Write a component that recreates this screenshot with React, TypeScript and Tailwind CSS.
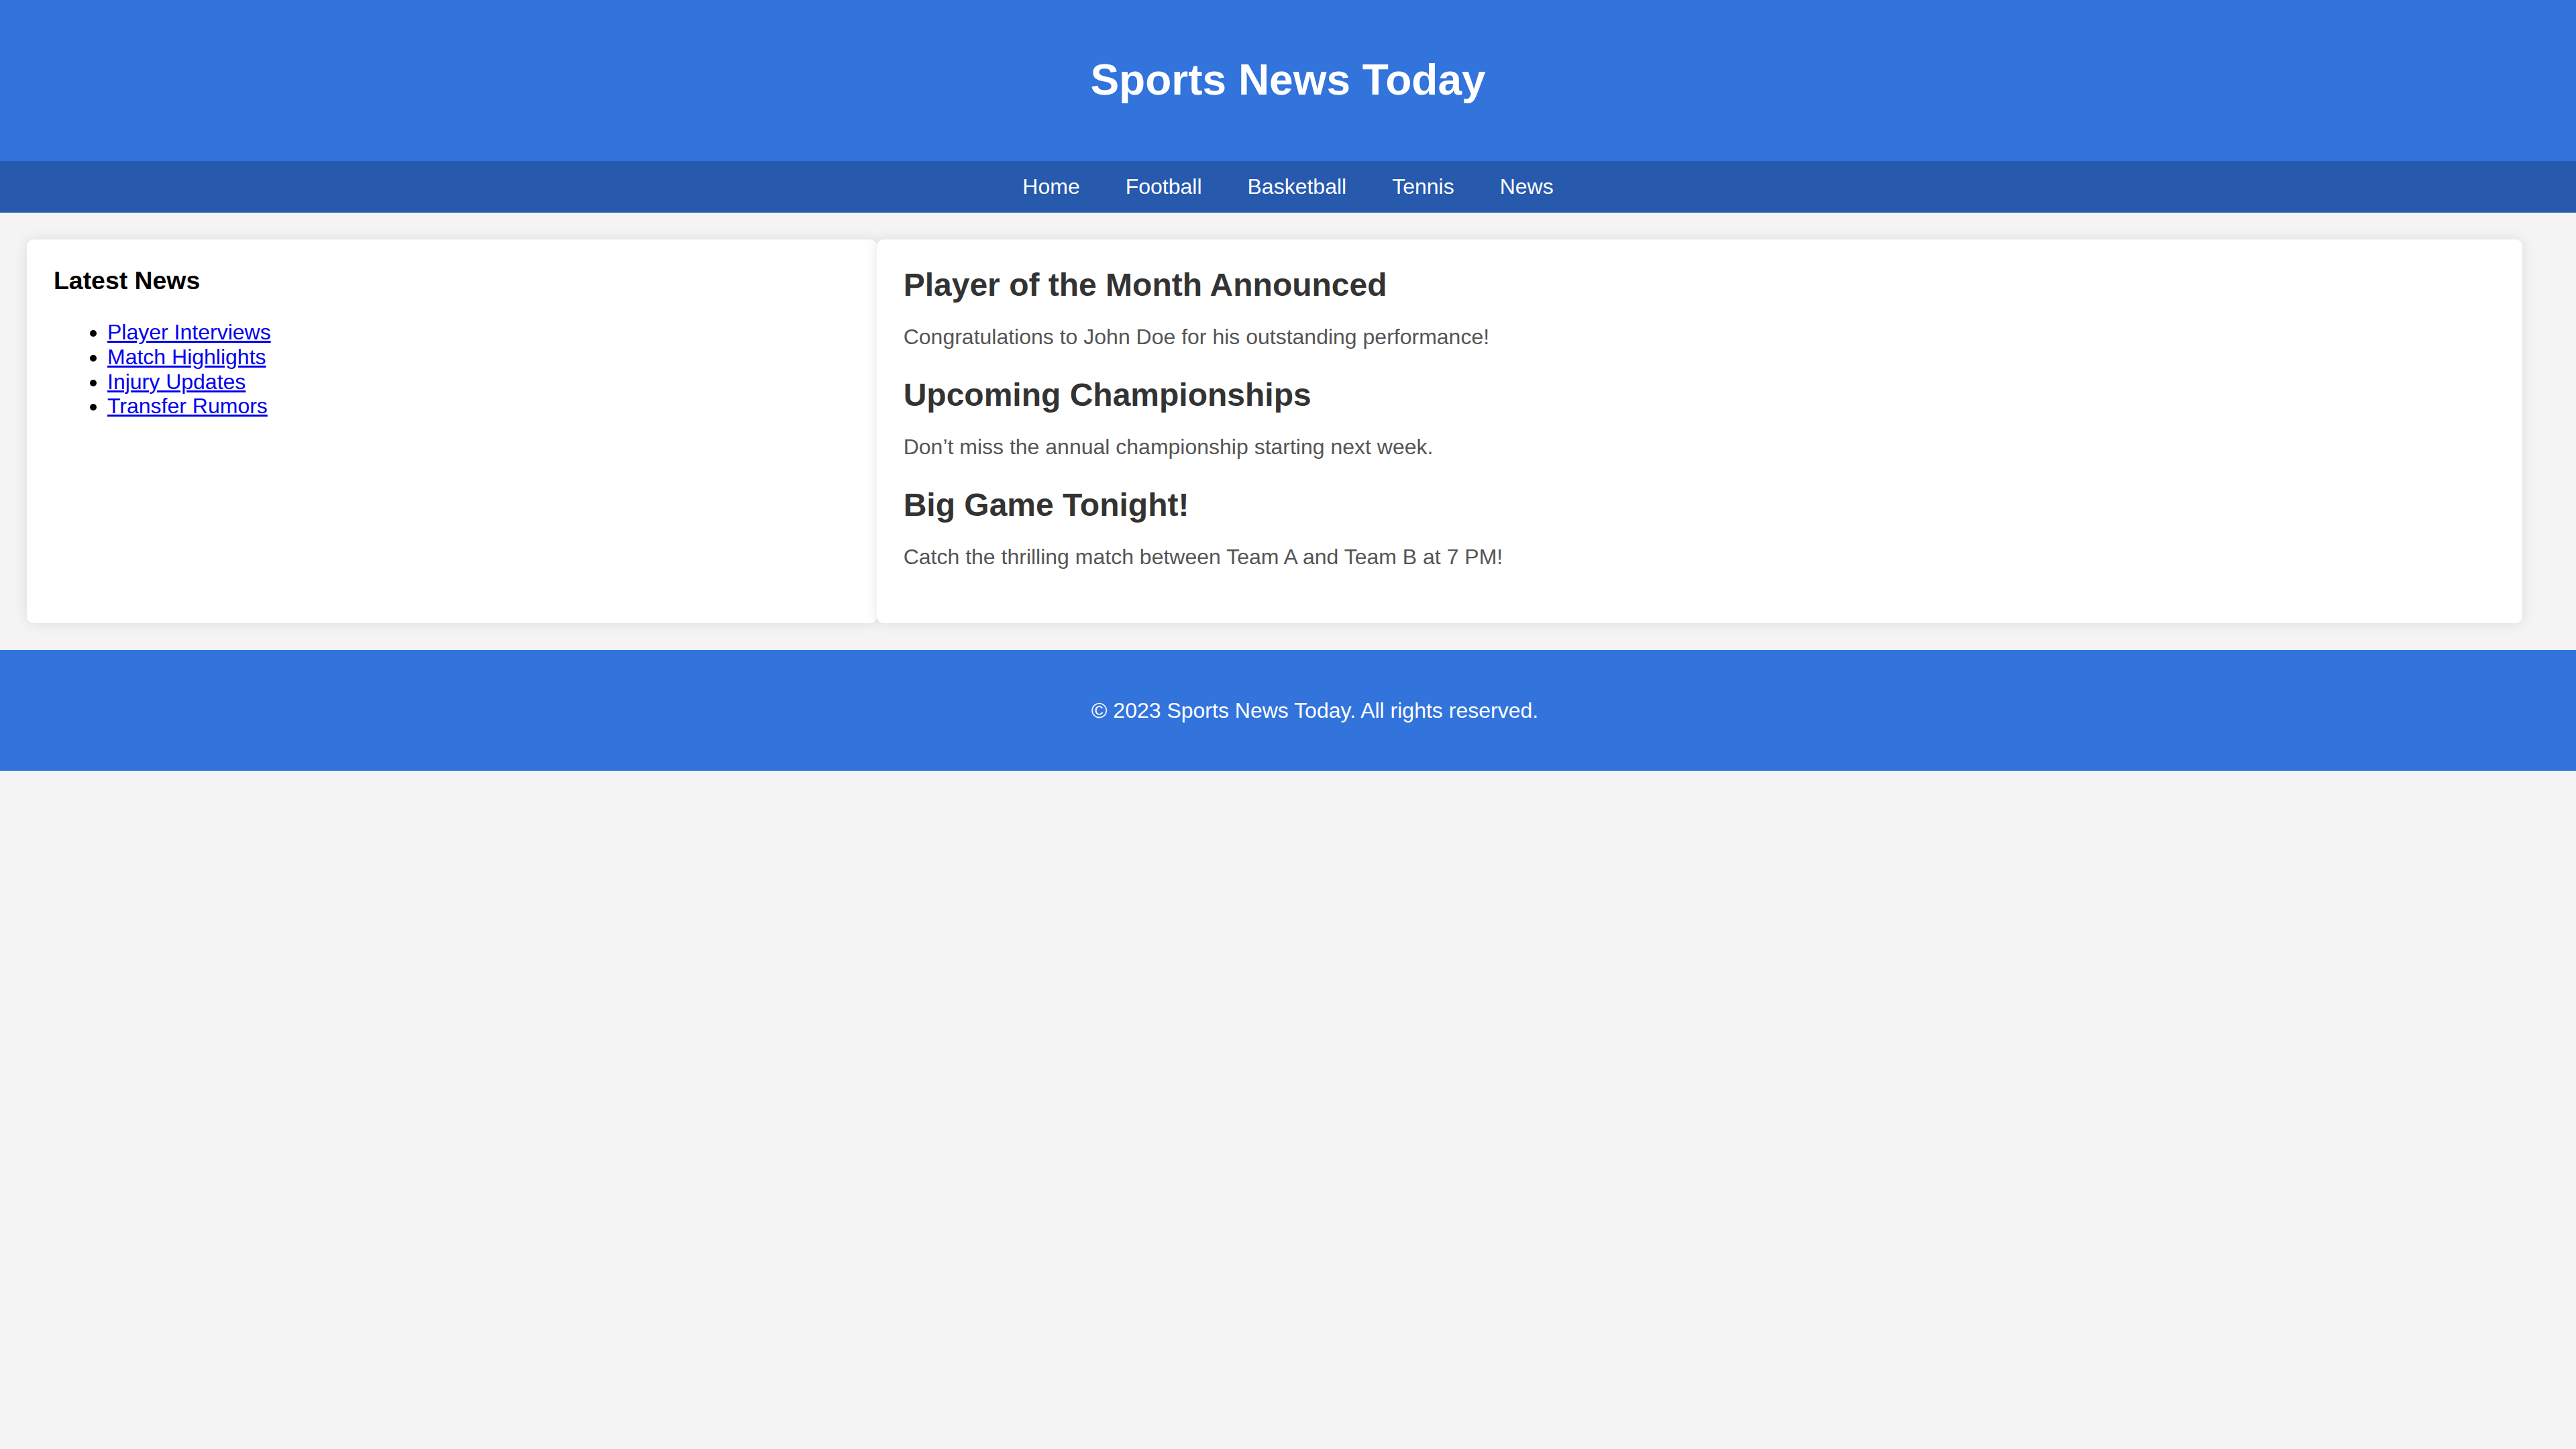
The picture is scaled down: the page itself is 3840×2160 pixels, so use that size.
const navItems = ['Home', 'Football', 'Basketball', 'Tennis', 'News'];

const latest = ['Player Interviews', 'Match Highlights', 'Injury Updates', 'Transfer Rumors'];

const stories = [
  {
    title: 'Player of the Month Announced',
    body: 'Congratulations to John Doe for his outstanding performance!',
  },
  {
    title: 'Upcoming Championships',
    body: 'Don’t miss the annual championship starting next week.',
  },
  {
    title: 'Big Game Tonight!',
    body: 'Catch the thrilling match between Team A and Team B at 7 PM!',
  },
];

export default function App() {
  return (
    <div className="min-h-screen bg-[#f4f4f4] font-['Liberation_Sans','Arial',sans-serif] text-black">
      {/* header */}
      <header className="h-[240px] flex items-center justify-center bg-[#3273dc]">
        <h1 className="text-[64px] leading-[73.5px] font-bold text-white">Sports News Today</h1>
      </header>

      {/* nav */}
      <nav className="h-[77px] flex items-center justify-center gap-[68px] bg-[#2759ad] text-white text-[32px] leading-[37px]">
        {navItems.map((item) => (
          <a key={item} href="#" className="text-white">
            {item}
          </a>
        ))}
      </nav>

      {/* main */}
      <main className="flex pl-[40px] pr-[80px] py-[40px]">
        <aside className="flex-1 p-[40px] bg-white rounded-[10px] shadow-[0_0_20px_rgba(0,0,0,0.1)]">
          <h3 className="text-[37.4px] leading-[43px] font-bold mb-[37px]">Latest News</h3>
          <ul className="list-disc pl-[80px] text-[32px] leading-[36.8px]">
            {latest.map((l) => (
              <li key={l}>
                <a href="#" className="text-[#0000ee] underline">
                  {l}
                </a>
              </li>
            ))}
          </ul>
        </aside>

        <section className="flex-[2] p-[40px] bg-white rounded-[10px] shadow-[0_0_20px_rgba(0,0,0,0.1)]">
          {stories.map((s) => (
            <article key={s.title} className="mb-[40px]">
              <h2 className="text-[48px] leading-[55px] font-bold text-[#333] mb-[32px]">{s.title}</h2>
              <p className="text-[32px] leading-[37px] text-[#555]">{s.body}</p>
            </article>
          ))}
        </section>
      </main>

      {/* footer */}
      <footer className="h-[180px] flex items-center justify-center pl-[80px] bg-[#3273dc] text-white text-[32px] leading-[37px]">
        <p>© 2023 Sports News Today. All rights reserved.</p>
      </footer>
    </div>
  );
}
